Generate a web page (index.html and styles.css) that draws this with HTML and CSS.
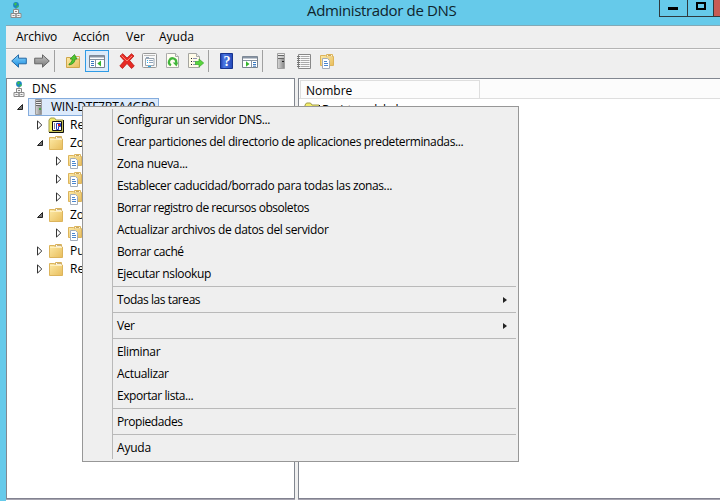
FILE: index.html
```html
<!DOCTYPE html>
<html lang="es">
<head>
<meta charset="utf-8">
<title>Administrador de DNS</title>
<link rel="stylesheet" href="styles.css">
</head>
<body>
<svg class="defs" aria-hidden="true">
  <defs>
    <linearGradient id="gold" x1="0" y1="0" x2="1" y2="1"><stop offset="0" stop-color="#fdeaa6"/><stop offset="1" stop-color="#e8bd5c"/></linearGradient>
    <linearGradient id="blue" x1="0" y1="0" x2="0" y2="1"><stop offset="0" stop-color="#8fd6fb"/><stop offset="1" stop-color="#168be0"/></linearGradient>
    <linearGradient id="gray" x1="0" y1="0" x2="0" y2="1"><stop offset="0" stop-color="#c4c4c4"/><stop offset="1" stop-color="#777"/></linearGradient>
    <linearGradient id="metal" x1="0" y1="0" x2="1" y2="0"><stop offset="0" stop-color="#d8d8d8"/><stop offset="1" stop-color="#858585"/></linearGradient>
    <linearGradient id="help" x1="0" y1="0" x2="1" y2="0"><stop offset="0" stop-color="#1f3fae"/><stop offset=".3" stop-color="#4c78e4"/><stop offset="1" stop-color="#2448b8"/></linearGradient>
    <symbol id="dns" viewBox="0 0 16 16">
      <circle cx="8" cy="3" r="2.9" fill="#1a83c4"/><path d="M6 1.500l2-1 1 1.500-2 2zM9 4l1.500-1v2L8 6z" fill="#3fc04a"/>
      <path d="M8 6v2" stroke="#777"/>
      <path d="M5.500 7.500h5v4h-5zM3 11.500h5v4H3zM8 11.500h5v4H8z" fill="#f4f4f4" stroke="#8a8a8a"/>
      <path d="M7 9.500h2M4.500 13.500h2M9.500 13.500h2" stroke="#888"/>
    </symbol>
    <symbol id="server" viewBox="0 0 16 16">
      <path d="M5.500.5h6v15h-6z" fill="url(#metal)" stroke="#9c9c9c"/>
      <path d="M6 2.500h5M6 4.500h5M6 6.500h5" stroke="#666"/><path d="M6 3.500h5M6 5.500h5" stroke="#eee"/>
      <path d="M9 9h2v2H9z" fill="#48a548"/>
    </symbol>
    <symbol id="tower" viewBox="0 0 16 16">
      <path d="M4.500.5h7v15h-7z" fill="url(#metal)" stroke="#a0a0a0"/>
      <path d="M5 1.500h6M5 4h6" stroke="#f0f0f0"/><path d="M5 2.500h6M5 5.500h6" stroke="#666"/><path d="M9 8h2v1H9z" fill="#222"/>
    </symbol>
    <symbol id="folder" viewBox="0 0 16 16">
      <path d="M1.500 14.500v-12h5l1 1.500h7v10.500z" fill="url(#gold)" stroke="#dcb45c"/>
      <path d="M7.500 3.500v-2h6v2" fill="#fff" stroke="#d8b05a"/><path d="M9 2.500h4" stroke="#c9b27a"/>
      <path d="M2 4.500h12" stroke="#fff0bf"/>
    </symbol>
    <symbol id="zone" viewBox="0 0 16 16">
      <path d="M1.500 12.500V2.500h5l1 1h7v9z" fill="url(#gold)" stroke="#dcb45c"/>
      <path d="M7.500 3.500v-2h6v2" fill="#fff6d5" stroke="#dcb45c"/><path d="M9 2.500h3" stroke="#c9a860"/>
      <path d="M3.500 5.500h5l2 2v8h-7z" fill="#fff" stroke="#a3adba"/>
      <path d="M5 8.500h3M5 10.500h4M5 12.500h4" stroke="#4b86cf"/>
    </symbol>
    <symbol id="log" viewBox="0 0 16 16">
      <path d="M1 15V3l1.500-2h4L8 3h7v12z" fill="#f3ee6a" stroke="#a19a4a"/>
      <path d="M4.500 4.500h9v9h-9z" fill="#fff" stroke="#111"/><path d="M15.500 3v12.500H1" fill="none" stroke="#111"/>
      <path d="M6.500 6v6" stroke="#888"/><path d="M8.500 6.500h4v3h-2v3h-2z" fill="#fff" stroke="#273fc0"/><path d="M10 7h2v2h-2z" fill="#e01818"/>
    </symbol>
    <symbol id="closed" viewBox="0 0 8 10"><path d="M1.500 .9l4.300 4.100-4.300 4.100z" fill="#fff" stroke="#333"/></symbol>
    <symbol id="open" viewBox="0 0 8 10"><path d="M6.500 2.500v5h-5z" fill="#777" stroke="#222"/></symbol>
  </defs>
</svg>

<div class="window">
  <header class="titlebar">
    <svg class="icon app"><use href="#dns"/></svg>
    <h1>Administrador de DNS</h1>
    <div class="controls"><span class="ctl min"><i></i></span><span class="ctl max"><i></i></span><span class="ctl close"></span></div>
  </header>

  <nav class="menubar"><span class="m1">Archivo</span><span class="m2">Acción</span><span class="m3">Ver</span><span class="m4">Ayuda</span></nav>

  <div class="toolbar">
    <span class="tool"><svg class="icon" viewBox="0 0 16 16"><path d="M.7 8l6.800-6.200v3.400h7.800v5.600H7.500v3.400z" fill="url(#blue)" stroke="#2468a4"/></svg></span>
    <span class="tool"><svg class="icon" viewBox="0 0 16 16"><path d="M15.300 8L8.500 1.800v3.400H.7v5.600h7.800v3.400z" fill="url(#gray)" stroke="#666"/></svg></span>
    <span class="sep line"></span>
    <span class="tool"><svg class="icon" viewBox="0 0 16 16"><path d="M1.500 14.500v-10h4l1 1.500h8v8.500z" fill="url(#gold)" stroke="#cfa64c"/><path d="M9 3.500h5.500V6" fill="none" stroke="#d8b05a"/><path d="M4 11c2-1 3-2.500 3.200-5H5l4.500-4.500L12 6h-1.800C10 9 8 11.500 4 12z" fill="#4fc530" stroke="#2b8a1c" stroke-width=".7"/></svg></span>
    <span class="tool active"><svg class="icon" viewBox="0 0 16 16"><path d="M.5 2.500h15v12H.5z" fill="#fff" stroke="#78828e"/><path d="M1 3.500h14" stroke="#8793a2" stroke-width="2"/><path d="M1 6.500h14M6.500 7v7.500" stroke="#8793a2"/><path d="M2 8.500h3M2 10.500h3M2 12.500h3" stroke="#3a79c0"/><path d="M12 7.500v6L8.300 10.500z" fill="#35b52d"/></svg></span>
    <span class="sep"></span>
    <span class="tool"><svg class="icon" viewBox="0 0 16 16"><path d="M1 3l2.800-2.300L8 5l4.500-4.300L15 3l-4.300 4.500L15.300 13 12.500 15.500 8 10.500 3.500 15.500.8 13 5.300 7.800z" fill="#e82a24" stroke="#b91c18" stroke-width=".8"/><path d="M2.500 2.500L8 8l5-5" fill="none" stroke="#f98070"/></svg></span>
    <span class="tool"><svg class="icon" viewBox="0 0 16 16"><rect x=".5" y=".5" width="14" height="14" rx="1" fill="#f8f8f8" stroke="#999"/><path d="M2 2.500h11" stroke="#bbb"/><path d="M3.500 5.500h8.500v7H3.500z" fill="#fff" stroke="#9aa5b0"/><path d="M5 7.500h1M5 9.500h1M6 13.500h3" stroke="#2bb0f0"/><path d="M7 7.500h4M7 9.500h4M4 4.500h3" stroke="#8fa3ba"/></svg></span>
    <span class="tool"><svg class="icon" viewBox="0 0 16 16"><path d="M2.500.5h8l3 3v11h-12v-14z" fill="#fffdf2" stroke="#aaa"/><path d="M10.500.5v3h3" fill="#eee" stroke="#aaa"/><path d="M6 12.200A3.600 3.600 0 1 1 11 10" fill="none" stroke="#41b53a" stroke-width="2.200"/><path d="M7.800 9.500h5.400l-1.700 4z" fill="#41b53a"/></svg></span>
    <span class="tool"><svg class="icon" viewBox="0 0 16 16"><path d="M.5.500h8l3 3v11H.5z" fill="#fffbe8" stroke="#a5a5a0"/><path d="M8.500.5v3h3" fill="#eee" stroke="#aaa"/><path d="M3 5.500h1M3 8.500h1M3 11.500h1" stroke="#222"/><path d="M5 5.500h4M5 8.500h3M5 11.500h3" stroke="#8f93b5"/><path d="M7.500 8.500h3.500V6l4.700 4-4.700 4V11.500H7.500z" fill="#58d43c" stroke="#35a628" stroke-width=".7"/></svg></span>
    <span class="sep line"></span>
    <span class="tool"><svg class="icon" viewBox="0 0 16 16"><path d="M1.500.500h12v15h-12z" fill="url(#help)" stroke="#17338e"/><text x="8" y="13.300" class="mark">?</text></svg></span>
    <span class="tool"><svg class="icon" viewBox="0 0 16 16"><path d="M.5 3.500h15v11H.5z" fill="#fff" stroke="#78828e"/><path d="M1 4.500h14" stroke="#8793a2" stroke-width="2"/><path d="M1 7.500h14M9.500 8v6.500" stroke="#8793a2"/><path d="M11 9.500h3M11 11.500h3M11 13.200h3" stroke="#3a79c0"/><path d="M4 8.300v5.400L7.500 11z" fill="#35b52d"/></svg></span>
    <span class="sep line"></span>
    <span class="tool"><svg class="icon"><use href="#tower"/></svg></span>
    <span class="tool"><svg class="icon" viewBox="0 0 16 16"><path d="M2.500 1.500h12v14h-12z" fill="#fafafa" stroke="#888"/><path d="M4.500 3.500h9M4.500 5.500h9M4.500 7.500h9M4.500 9.500h9M4.500 11.500h9M4.500 13.500h9" stroke="#aaa"/><path d="M1 3.500h3M1 5.500h3M1 7.500h3M1 9.500h3M1 11.500h3M1 13.500h3" stroke="#777"/></svg></span>
    <span class="tool"><svg class="icon"><use href="#zone"/></svg></span>
  </div>

  <main class="panes">
    <section class="tree">
      <div class="row l0"><svg class="icon"><use href="#dns"/></svg><span>DNS</span></div>
      <div class="row l1"><svg class="tw"><use href="#open"/></svg><div class="sel"><svg class="icon"><use href="#server"/></svg><span>WIN-DTF7BTA4GB0</span></div></div>
      <div class="row l2"><svg class="tw"><use href="#closed"/></svg><svg class="icon"><use href="#log"/></svg><span>Re</span></div>
      <div class="row l2"><svg class="tw"><use href="#open"/></svg><svg class="icon"><use href="#folder"/></svg><span>Zo</span></div>
      <div class="row l3"><svg class="tw"><use href="#closed"/></svg><svg class="icon"><use href="#zone"/></svg></div>
      <div class="row l3"><svg class="tw"><use href="#closed"/></svg><svg class="icon"><use href="#zone"/></svg></div>
      <div class="row l3"><svg class="tw"><use href="#closed"/></svg><svg class="icon"><use href="#zone"/></svg></div>
      <div class="row l2"><svg class="tw"><use href="#open"/></svg><svg class="icon"><use href="#folder"/></svg><span>Zo</span></div>
      <div class="row l3"><svg class="tw"><use href="#closed"/></svg><svg class="icon"><use href="#zone"/></svg></div>
      <div class="row l2"><svg class="tw"><use href="#closed"/></svg><svg class="icon"><use href="#folder"/></svg><span>Pu</span></div>
      <div class="row l2"><svg class="tw"><use href="#closed"/></svg><svg class="icon"><use href="#folder"/></svg><span>Re</span></div>
    </section>
    <section class="list">
      <div class="head"><span class="col">Nombre</span></div>
      <div class="item"><svg class="icon"><use href="#log"/></svg><span>Registros globales</span></div>
    </section>
  </main>

  <div class="menu">
    <div class="entry"><span class="e1">Configurar un servidor DNS...</span></div>
    <div class="entry"><span class="e2">Crear particiones del directorio de aplicaciones predeterminadas...</span></div>
    <div class="entry"><span class="e3">Zona nueva...</span></div>
    <div class="entry"><span class="e4">Establecer caducidad/borrado para todas las zonas...</span></div>
    <div class="entry"><span class="e5">Borrar registro de recursos obsoletos</span></div>
    <div class="entry"><span class="e6">Actualizar archivos de datos del servidor</span></div>
    <div class="entry"><span class="e7">Borrar caché</span></div>
    <div class="entry"><span class="e8">Ejecutar nslookup</span></div>
    <div class="rule"></div>
    <div class="entry sub"><span class="e9">Todas las tareas</span></div>
    <div class="rule"></div>
    <div class="entry sub"><span class="e10">Ver</span></div>
    <div class="rule"></div>
    <div class="entry"><span class="e11">Eliminar</span></div>
    <div class="entry"><span class="e12">Actualizar</span></div>
    <div class="entry"><span class="e13">Exportar lista...</span></div>
    <div class="rule"></div>
    <div class="entry"><span class="e14">Propiedades</span></div>
    <div class="rule"></div>
    <div class="entry"><span class="e15">Ayuda</span></div>
  </div>
</div>
</body>
</html>
```
FILE: styles.css
```css
* { box-sizing: border-box; }
body { margin: 0; overflow: hidden; font: 12px/18px "Open Sans", "Noto Sans", sans-serif; color: #000; }
.defs { position: absolute; width: 0; height: 0; }
.icon { width: 16px; height: 16px; flex: none; display: block; }
.window { position: relative; width: 720px; height: 501px; padding-left: 6px; background: #66caea; display: flex; flex-direction: column; overflow: hidden; }

.titlebar { height: 25px; flex: none; display: flex; position: relative; }
.app { margin: 2px 0 0 2px; }
.titlebar h1 { margin: 0 0 0 283px; font-size: 15px; font-weight: 400; line-height: 21px; letter-spacing: -0.35px; white-space: nowrap; color: #10242c; }
.controls { margin-left: auto; display: flex; height: 17px; }
.ctl { border: 1px solid #2f3a3e; border-top: 0; border-right: 0; display: block; }
.min { width: 28px; padding: 7px 0 0 8px; }
.min i { display: block; width: 10px; height: 3px; background: #000; }
.max { width: 26px; padding: 2px 0 0 8px; }
.max i { display: block; width: 10px; height: 8px; border: 2px solid #000; }
.close { width: 7px; background: #c75b54; }

.menubar { height: 23px; flex: none; background: #efefef; border-top: 1px solid #82a9b6; display: flex; padding-left: 10px; line-height: 22px; }
.menubar span { flex: none; }
.m1 { width: 57px; letter-spacing: -0.1px; }
.m2 { width: 53px; }
.m3 { width: 33px; }

.toolbar { height: 30px; flex: none; background: #efefef; border-top: 1px solid #b4b4b4; box-shadow: inset 0 1px #fafafa; display: flex; padding: 1px 0 0 2px; }
.tool { width: 23px; height: 22px; padding: 3px; flex: none; }
.active { width: 24px; margin-right: -1px; padding: 2px 3px; background: #dcebfa; border: 1px solid #2f9be6; }
.sep { width: 8px; height: 22px; flex: none; }
.line { border-left: 1px solid #a0a0a0; }
.mark { font: bold 14px "Liberation Serif", serif; fill: #fff; text-anchor: middle; }

.panes { flex: 1; display: grid; grid-template-columns: 289px 1fr; gap: 3px; background: #efefef; border-bottom: 1px solid #fff; min-height: 0; }
.tree, .list { background: #fff; border: 1px solid #828790; overflow: hidden; border-bottom-color: #828290; box-shadow: 0 1px #a6a4b0; margin-bottom: 1px; }
.list { border-right: 0; }
.tree { padding-top: 1px; }
.row { height: 18px; display: flex; align-items: center; white-space: nowrap; }
.row > span { margin-left: 5px; }
.tw { width: 8px; height: 10px; margin-right: 4px; flex: none; }
.l0 { padding-left: 4px; }
.l1 { padding-left: 9px; }
.l1 .tw { margin-right: 6px; }
.l2 { padding-left: 29px; }
.l2 > span { margin-left: 6px; }
.l3 { padding-left: 48px; }
.sel { width: 131px; height: 18px; margin-left: -2px; display: flex; align-items: center; border: 1px solid #84acdd; background: #dceafb; padding-left: 1px; }
.sel span { margin-left: 5px; letter-spacing: -0.25px; }

.head { height: 20px; background: #fcfcfc; border-bottom: 1px solid #dedede; padding: 1px 0 0 1px; display: flex; }
.col { width: 180px; border: 1px solid #dedede; border-bottom: 0; padding-left: 5px; line-height: 19px; }
.item { display: flex; align-items: center; padding: 2px 0 0 5px; height: 20px; }
.item span { margin-left: 2px; letter-spacing: -0.8px; }

.menu { position: absolute; left: 82px; top: 106px; width: 437px; height: 356px; border: 1px solid #979797; padding: 2px; background: linear-gradient(#b9b9b9, #b9b9b9) 29px 2px / 1px 350px no-repeat #efefef; }
.entry { height: 22px; line-height: 22px; padding-left: 32px; display: flex; white-space: nowrap; }
.sub { justify-content: space-between; align-items: center; }
.sub::after { content: ""; margin-right: 9px; border: solid transparent; border-width: 3.5px 0 3.5px 4px; border-left-color: #222; }
.rule { height: 4px; margin-left: 28px; background: linear-gradient(#b9b9b9, #b9b9b9) 0 1px / 100% 1px no-repeat; }

.e1 { letter-spacing: -0.35px; }
.e2 { letter-spacing: -0.38px; }
.e3 { letter-spacing: -0.32px; }
.e4 { letter-spacing: -0.385px; }
.e5 { letter-spacing: -0.46px; }
.e6 { letter-spacing: -0.34px; }
.e7 { letter-spacing: -0.42px; }
.e8 { letter-spacing: -0.36px; }
.e9 { letter-spacing: -0.44px; }
.e10 { letter-spacing: -0.5px; }
.e11, .e12 { letter-spacing: -0.32px; }
.e13, .e14 { letter-spacing: -0.43px; }
.e15 { letter-spacing: -0.2px; }
```
